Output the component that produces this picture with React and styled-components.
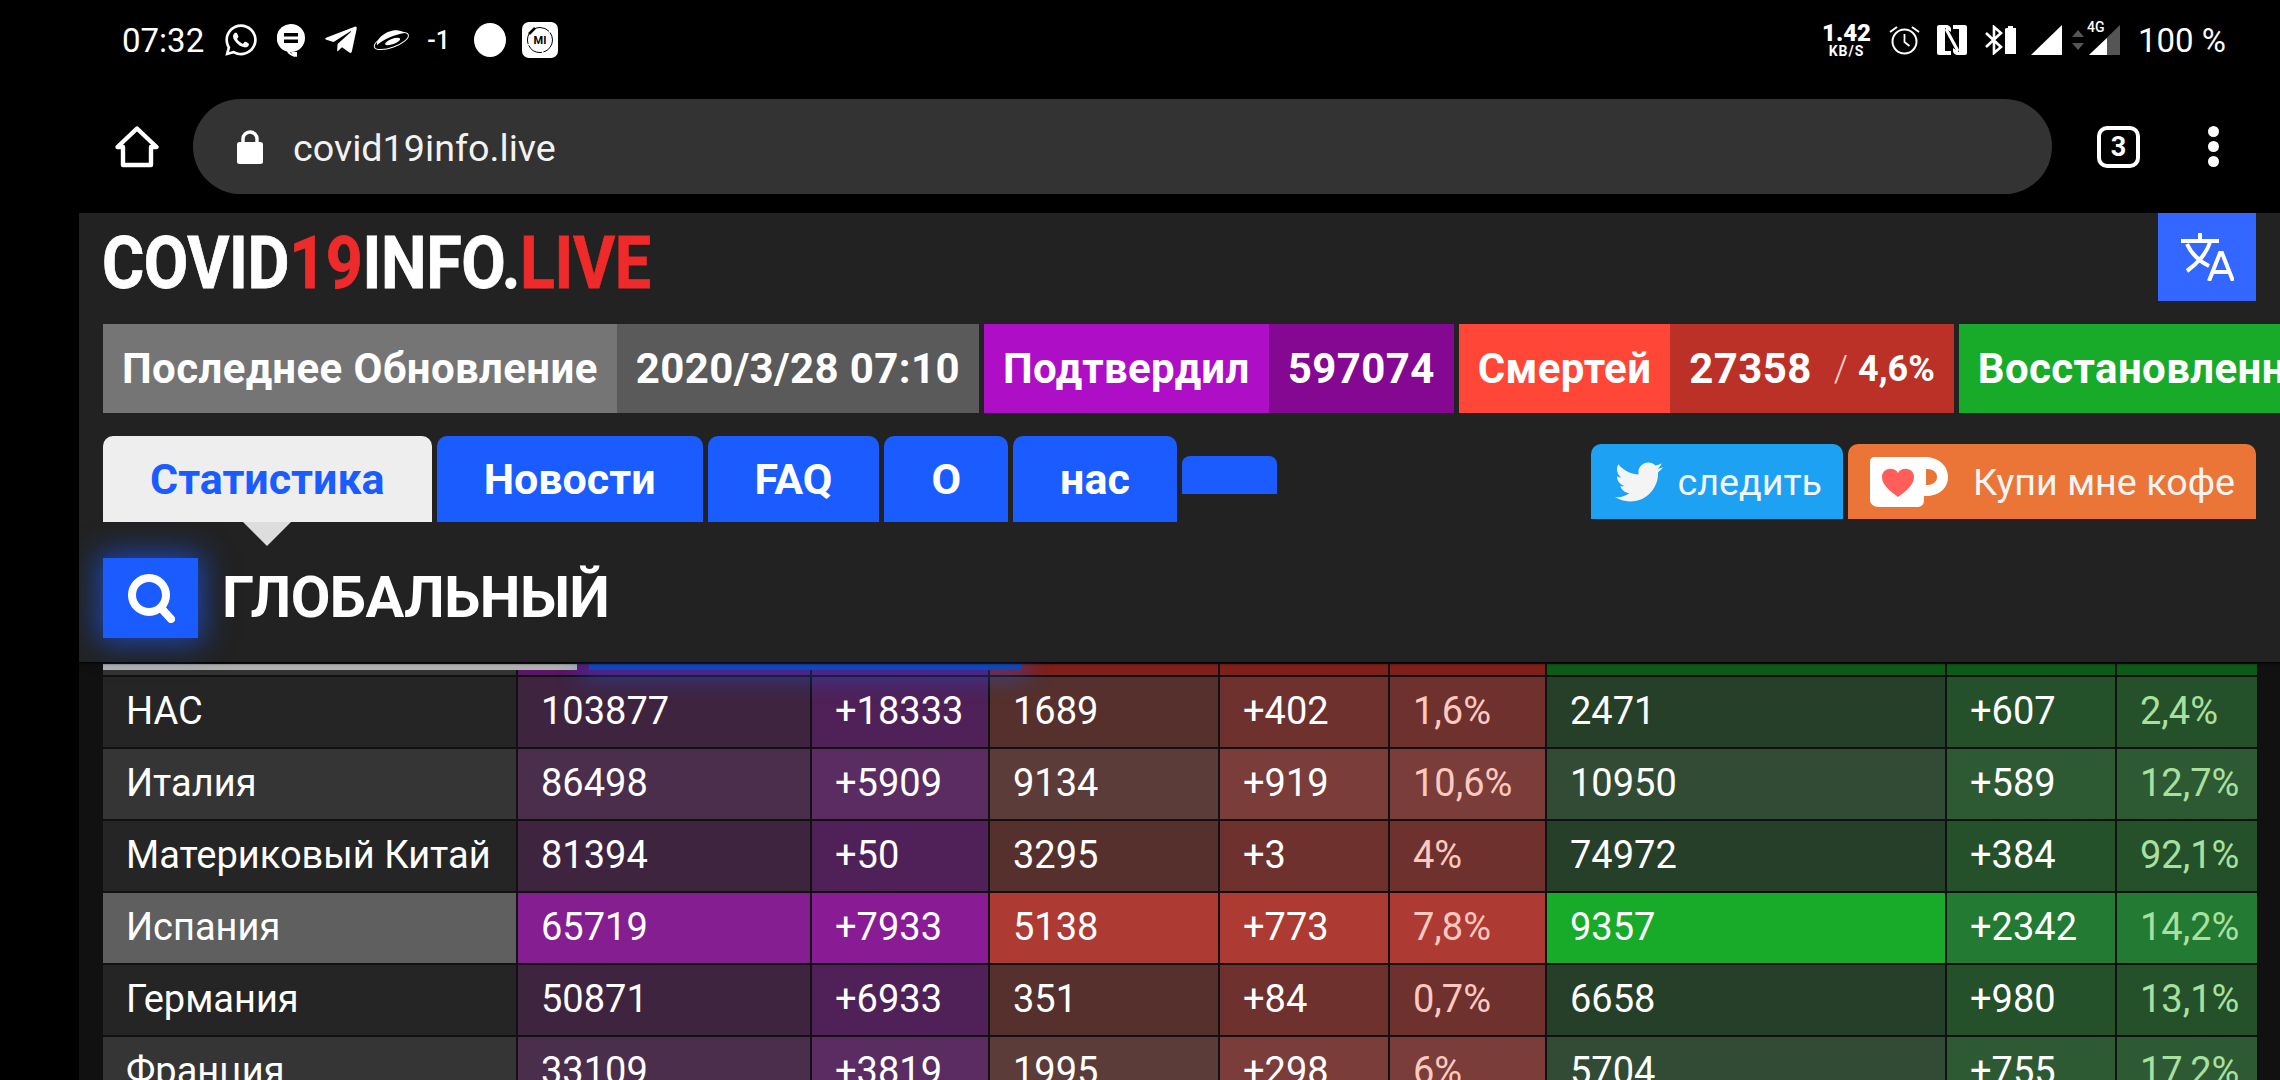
import React from "react";
import styled, { createGlobalStyle } from "styled-components";
import { FaWhatsapp, FaTelegramPlane, FaTwitter } from "react-icons/fa";

const Global = createGlobalStyle`
  html, body { margin: 0; padding: 0; background: #000; }
  * { box-sizing: border-box; }
`;

const Screen = styled.div`
  width: 2280px; height: 1080px; overflow: hidden; background: #000; color: #fff;
  font-family: Roboto, "Liberation Sans", sans-serif;
  display: flex; flex-direction: column;
`;
const StatusBar = styled.div`
  height: 80px; flex: none; padding: 0 54px 0 122px; display: flex; align-items: center;
  font-size: 33px;
`;
const Slot = styled.div`
  margin-left: ${p => p.$ml || 0}px; display: flex; align-items: center; line-height: 1; flex: none;
`;
const Spacer = styled.div` flex: 1; `;
const Minus = styled(Slot)` font-size: 25px; font-weight: 500; `;
const Speed = styled(Slot)`
  flex-direction: column; font-weight: 700; width: 45px;
  & > b { font-size: 24px; line-height: 21px; letter-spacing: 0; }
  & > small { font-size: 14px; line-height: 14px; letter-spacing: 1px; white-space: nowrap; }
`;
const Toolbar = styled.div`
  height: 95px; flex: none; margin-top: 19px; margin-bottom: 19px; display: flex; align-items: center; padding-left: 115px;
`;
const UrlBar = styled.div`
  margin-left: 34px; width: 1859px; height: 95px; border-radius: 48px; background: #333;
  display: flex; align-items: center; padding-left: 44px; font-size: 37.7px; color: #f2f2f2;
  & > span { margin-left: 30px; padding-top: 2px; }
`;
const TabCount = styled.div`
  margin-left: 45px; width: 43px; height: 42px; border: 4.5px solid #fff; border-radius: 10px;
  display: flex; align-items: center; justify-content: center; font-size: 27px; font-weight: 700;
`;
const Dots = styled.div`
  margin-left: 68px; display: flex; flex-direction: column; gap: 4px;
  & > i { width: 11px; height: 11px; border-radius: 50%; background: #fff; display: block; }
`;
const Panel = styled.div`
  margin-left: 79px; flex: 1; min-height: 0; overflow: hidden; background: #111; display: flex; flex-direction: column; position: relative;
`;
const Header = styled.div`
  background: #222; height: 449px; flex: none; padding: 0 24px; box-shadow: 0 1px 3px #000; position: relative; z-index: 2;
`;
const LogoRow = styled.div`
  height: 111px; display: flex; justify-content: space-between; align-items: flex-start;
`;
const Logo = styled.div`
  margin-top: 15px; margin-left: -1px; font-size: 72px; line-height: 72px; font-weight: 700; white-space: nowrap;
  transform: scaleX(.896); transform-origin: left center; letter-spacing: -.4px; -webkit-text-stroke: .8px currentColor;
  & > em { font-style: normal; color: #ee2a2a; }
`;
const Translate = styled.div`
  width: 98px; height: 88px; background: #3367ff; display: flex; align-items: center; justify-content: center;
`;
const Stats = styled.div` display: flex; height: 89px; gap: 5px; white-space: nowrap; `;
const StatGroup = styled.div` display: flex; flex: none; `;
const StatLabel = styled.div`
  background: ${p => p.$bg}; padding: 0 19px; display: flex; align-items: center; font-size: 42px; font-weight: 700; letter-spacing: .38px;
`;
const StatValue = styled(StatLabel)`
  & > small { font-size: 36px; margin-left: 22px; letter-spacing: 0; }
  & > small > u { text-decoration: none; font-weight: 300; color: #ffd0cc; margin-right: 10px; }
`;
const Nav = styled.div` margin-top: 23px; height: 86px; display: flex; gap: 5px; align-items: flex-start; `;
const Tab = styled.div`
  position: relative; height: 86px; padding: 0 47px; border-radius: 10px 10px 0 0; font-size: 43px; font-weight: 700;
  display: flex; align-items: center; background: ${p => p.$active ? "#eee" : "#1a5cff"}; color: ${p => p.$active ? "#1a5cff" : "#fff"};
  ${p => p.$active ? `&::after { content: ""; position: absolute; left: 140px; top: 86px; border: solid transparent; border-width: 24px 24px 0; border-top-color: #ddd; }` : ""}
`;
const EmptyTab = styled.div`
  width: 95px; height: 38px; margin-top: 20px; border-radius: 8px 8px 0 0; background: #1a5cff;
`;
const SocialBtn = styled.div`
  height: 75px; margin-top: 8px; border-radius: 10px 10px 0 0; background: ${p => p.$bg}; display: flex; align-items: center;
  font-size: 37.7px; color: #f4f4f4; padding: 0 21px 0 ${p => p.$pl}px; gap: ${p => p.$gap}px; flex: none;
  & > svg { flex: none; }
`;
const Heading = styled.div` margin-top: 36px; display: flex; align-items: center; gap: 24px; `;
const SearchBox = styled.div`
  width: 95px; height: 80px; background: #1a5cff; box-shadow: 0 0 28px 4px #1a5cffaa; display: flex; align-items: center; justify-content: center;
`;
const Title = styled.h1` margin: 0; font-size: 57.6px; font-weight: 700; line-height: 80px; letter-spacing: -.5px; `;
const TableWrap = styled.div` position: relative; padding: 2px 0 0 24px; `;
const Grid = styled.div`
  display: grid; gap: 2px; width: 2154px;
  grid-template-columns: 413px 292px 176px 228px 168px 155px 398px 168px 140px;
  grid-auto-rows: 70px; grid-template-rows: 11px;
`;
const HeadCell = styled.div` background: ${p => p.$bg}; `;
const Cell = styled.div`
  background: ${p => p.$bg}; color: ${p => p.$color || "#fff"}; padding-left: 23px; display: flex; align-items: center;
  font-size: 38px; padding-bottom: 3px; white-space: nowrap;
`;
const ScrollThumb = styled.div`
  position: absolute; top: 2px; height: 6px; left: ${p => p.$left}px; width: ${p => p.$width}px; background: ${p => p.$bg};
  box-shadow: ${p => p.$glow ? "0 0 24px 8px #1a5cff66" : "none"};
`;

const palette = {
  name: ["#252525", "#353535", "#5f5f5f"],
  conf: ["#3f2440", "#4a2e4c", "#851f91"],
  confNew: ["#4f2158", "#5a2c62", "#891c95"],
  death: ["#55302c", "#5b3c39", "#ad3a33"],
  deathNew: ["#6f312e", "#7a3d3a", "#ad3a33"],
  rec: ["#263f28", "#324b34", "#18ab2a"],
  recNew: ["#24512a", "#2d5a33", "#227a33"],
};
const columns = [
  ["name"], ["conf"], ["confNew"], ["death"], ["deathNew"], ["deathNew", "#ffc9c0"], ["rec"], ["recNew"], ["recNew", "#a9e09f"],
];
const heads = ["#333333", "#5a1564", "#5a1564", "#7f201a", "#7f201a", "#7f201a", "#0e5a18", "#0e5a18", "#0e5a18"];
const rows = [
  [0, "НАС", "103877", "+18333", "1689", "+402", "1,6%", "2471", "+607", "2,4%"],
  [1, "Италия", "86498", "+5909", "9134", "+919", "10,6%", "10950", "+589", "12,7%"],
  [0, "Материковый Китай", "81394", "+50", "3295", "+3", "4%", "74972", "+384", "92,1%"],
  [2, "Испания", "65719", "+7933", "5138", "+773", "7,8%", "9357", "+2342", "14,2%"],
  [0, "Германия", "50871", "+6933", "351", "+84", "0,7%", "6658", "+980", "13,1%"],
  [1, "Франция", "33109", "+3819", "1995", "+298", "6%", "5704", "+755", "17,2%"],
];

const Bubble = () => (
  <svg width="28" height="33" viewBox="0 0 28 33">
    <path d="M14 0a14 14 0 1 1 0 28h-1v0l0 0c1 1 3 3 6 4l-1 1c-4-1-7-3-8-5.5A14 14 0 0 1 14 0z" fill="#fff" />
    <path d="M14 28l6 0v5c-3-1-5-3-6-5z" fill="#fff" />
    <rect x="7" y="9" width="14" height="3.5" fill="#000" />
    <rect x="7" y="15.5" width="14" height="3.5" fill="#000" />
  </svg>
);
const Ufo = () => (
  <svg width="36" height="26" viewBox="0 0 36 26">
    <g transform="rotate(-20 18 13)">
      <ellipse cx="18" cy="14" rx="18" ry="6.5" fill="none" stroke="#fff" strokeWidth="1" />
      <path d="M3 13C6 3 28 1 33 11C24 9 10 10 3 13z" fill="#fff" />
      <ellipse cx="19" cy="15" rx="8" ry="2.6" fill="#fff" />
    </g>
  </svg>
);
const MiIcon = () => (
  <svg width="36" height="36" viewBox="0 0 36 36">
    <rect width="36" height="36" rx="7" fill="#fff" />
    <circle cx="18" cy="18" r="12.5" fill="none" stroke="#000" strokeWidth="1" strokeDasharray="16 1.5" />
    <path d="M7 12l6-6" stroke="#000" strokeWidth="2.5" />
    <text x="18" y="22" fontSize="11" fontWeight="700" textAnchor="middle" fill="#000" fontFamily="Roboto">MI</text>
  </svg>
);
const Alarm = () => (
  <svg width="31" height="30" viewBox="0 0 31 30" fill="none" stroke="#fff" strokeWidth="2">
    <circle cx="15.5" cy="16.5" r="12" />
    <path d="M15.5 9v8l5 4" strokeWidth="1.8" />
    <path d="M1 7l7-5M30 7l-7-5" />
  </svg>
);
const Nfc = () => (
  <svg width="30" height="30" viewBox="0 0 30 30">
    <path d="M2 0h7c3 0 5 2 5 4v3l-6-4v23h6v4H2c-1 0-2-1-2-2V2c0-1 1-2 2-2z" fill="#fff" />
    <path d="M28 30h-7c-3 0-5-2-5-4v-3l6 4V4h-6V0h12c1 0 2 1 2 2v26c0 1-1 2-2 2z" fill="#fff" />
    <path d="M9 4l12 22" stroke="#fff" strokeWidth="3" />
  </svg>
);
const Bt = () => (
  <svg width="32" height="30" viewBox="0 0 32 30">
    <path d="M1 8l15 14-7 6V2l7 6L1 22" fill="none" stroke="#fff" strokeWidth="2.6" />
    <path d="M21 3h2V1h5v2h3v26H20V4z" fill="#fff" />
  </svg>
);
const Signal = () => (
  <svg width="31" height="30" viewBox="0 0 31 30"><path d="M0 30L31 0v30z" fill="#fff" /></svg>
);
const Arrows = () => (
  <svg width="12" height="24" viewBox="0 0 12 24" fill="#555">
    <path d="M6 2l6 7H0zM6 22l6-7H0z" />
  </svg>
);
const FourG = styled(Slot)`
  position: relative; width: 31px; height: 30px;
  & > span { position: absolute; left: -2px; top: -5px; font-size: 14px; font-weight: 500; z-index: 1; text-shadow: 0 0 1px #000; }
`;
const Signal4g = () => (
  <svg width="31" height="30" viewBox="0 0 31 30">
    <path d="M0 30L31 0v30z" fill="#555" />
    <path d="M0 30L18 13v17z" fill="#fff" />
  </svg>
);
const Home = () => (
  <svg width="44" height="42" viewBox="0 0 44 42" fill="none" stroke="#fff" strokeWidth="4.4" strokeLinejoin="round">
    <path d="M2.5 21L22 2.5 41.5 21H36v18H8V21z" />
  </svg>
);
const Lock = () => (
  <svg width="26" height="34" viewBox="0 0 26 34">
    <path d="M6 14V9a7 7 0 0 1 14 0v5" fill="none" stroke="#fff" strokeWidth="3.4" />
    <rect y="12" width="26" height="22" rx="2.5" fill="#fff" />
  </svg>
);
const SearchGlyph = () => (
  <svg width="48" height="50" viewBox="0 0 48 50" fill="none" stroke="#fff" strokeWidth="8" strokeLinecap="round">
    <circle cx="22" cy="22" r="17" />
    <path d="M34 35l10 11" />
  </svg>
);
const TranslateIcon = () => (
  <svg width="53" height="48" viewBox="0 0 53 48" fill="none" stroke="#fff" strokeWidth="4">
    <path d="M0 8h38M19 0v8M6 11c4 9 12 17 22 22M29 9c-3 11-13 22-23 29" />
    <path d="M28 48L39 20h2L52 48M32 39h17" />
  </svg>
);
const Kofi = () => (
  <svg width="78" height="50" viewBox="0 0 78 50">
    <path d="M4 0h50c14 0 24 8 24 20s-10 19-22 19h-2v5c0 3-3 6-6 6H9c-5 0-9-3-9-7V4c0-2 2-4 4-4z" fill="#fff" />
    <path d="M56 12h1c7 0 10 4 10 8s-3 8-10 8h-1z" fill="#ea7537" />
    <path d="M28 40C20 34 12 28 12 20c0-9 12-11 16-4 4-7 16-5 16 4 0 8-8 14-16 20z" fill="#ff5e5b" />
  </svg>
);

export default function App() {
  return (
    <Screen>
      <Global />
      <StatusBar>
        <Slot>07:32</Slot>
        <Slot $ml={19}><FaWhatsapp size={36} /></Slot>
        <Slot $ml={18}><Bubble /></Slot>
        <Slot $ml={18}><FaTelegramPlane size={36} /></Slot>
        <Slot $ml={14}><Ufo /></Slot>
        <Minus $ml={18}>-1</Minus>
        <Slot $ml={24}><svg width="32" height="34" viewBox="0 0 32 34"><ellipse cx="16" cy="17" rx="16" ry="17" fill="#fff" /></svg></Slot>
        <Slot $ml={16}><MiIcon /></Slot>
        <Spacer />
        <Speed><b>1.42</b><small>KB/S</small></Speed>
        <Slot $ml={20}><Alarm /></Slot>
        <Slot $ml={17}><Nfc /></Slot>
        <Slot $ml={18}><Bt /></Slot>
        <Slot $ml={14}><Signal /></Slot>
        <Slot $ml={10}><Arrows /></Slot>
        <FourG $ml={5}><span>4G</span><Signal4g /></FourG>
        <Slot $ml={18}>100 %</Slot>
      </StatusBar>
      <Toolbar>
        <Home />
        <UrlBar><Lock /><span>covid19info.live</span></UrlBar>
        <TabCount>3</TabCount>
        <Dots><i /><i /><i /></Dots>
      </Toolbar>
      <Panel>
        <Header>
          <LogoRow>
            <Logo>COVID<em>19</em>INFO.<em>LIVE</em></Logo>
            <Translate><TranslateIcon /></Translate>
          </LogoRow>
          <Stats>
            <StatGroup>
              <StatLabel $bg="#757575">Последнее Обновление</StatLabel>
              <StatValue $bg="#5a5a5a">2020/3/28 07:10</StatValue>
            </StatGroup>
            <StatGroup>
              <StatLabel $bg="#ae0ec6">Подтвердил</StatLabel>
              <StatValue $bg="#840892">597074</StatValue>
            </StatGroup>
            <StatGroup>
              <StatLabel $bg="#ff4637">Смертей</StatLabel>
              <StatValue $bg="#bb3127">27358<small><u>/</u>4,6%</small></StatValue>
            </StatGroup>
            <StatGroup>
              <StatLabel $bg="#18ab2a">Восстановленные</StatLabel>
            </StatGroup>
          </Stats>
          <Nav>
            <Tab $active>Статистика</Tab>
            <Tab>Новости</Tab>
            <Tab>FAQ</Tab>
            <Tab>О</Tab>
            <Tab>нас</Tab>
            <EmptyTab />
            <Spacer />
            <SocialBtn $bg="#1da1f2" $pl={24} $gap={14}><FaTwitter size={48} />следить</SocialBtn>
            <SocialBtn $bg="#ea7537" $pl={22} $gap={25}><Kofi />Купи мне кофе</SocialBtn>
          </Nav>
          <Heading>
            <SearchBox><SearchGlyph /></SearchBox>
            <Title>ГЛОБАЛЬНЫЙ</Title>
          </Heading>
        </Header>
        <TableWrap>
          <ScrollThumb $left={24} $width={474} $bg="#b0b0b0" />
          <ScrollThumb $left={510} $width={432} $bg="#1346b8" $glow />
          <Grid>
            {heads.map((bg, i) => <HeadCell key={i} $bg={bg} />)}
            {rows.map(([tone, ...cells], r) =>
              cells.map((text, c) => (
                <Cell key={r + "-" + c} $bg={palette[columns[c][0]][tone]} $color={columns[c][1]}>{text}</Cell>
              ))
            )}
          </Grid>
        </TableWrap>
      </Panel>
    </Screen>
  );
}
